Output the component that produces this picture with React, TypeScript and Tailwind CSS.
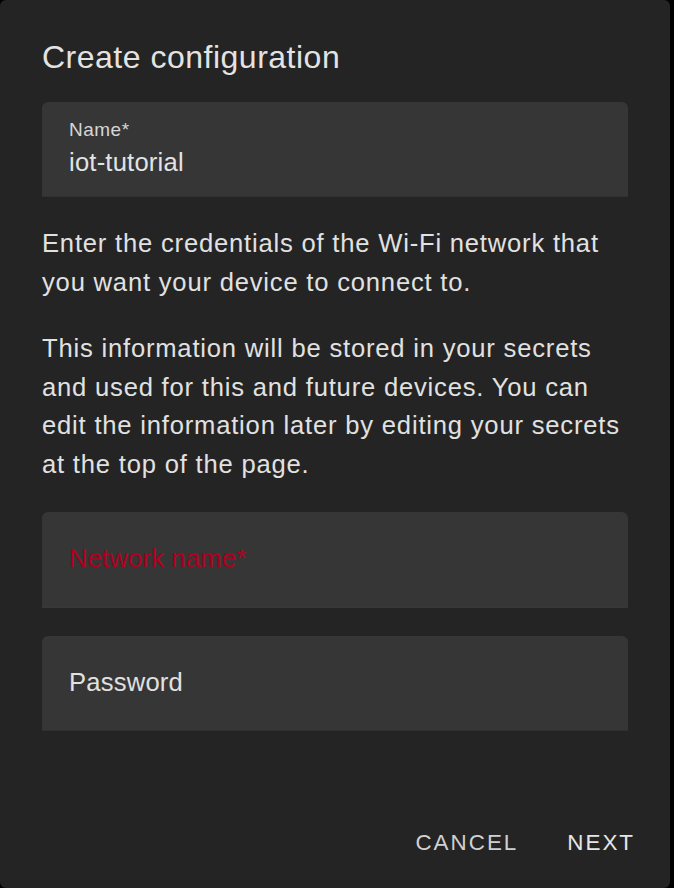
export default function App() {
  return (
    <div className="min-h-screen bg-black" style={{ fontFamily: '"Liberation Sans", Arial, sans-serif' }}>
      <div className="flex h-[888px] w-[670px] flex-col rounded-[6px] bg-[#242424] text-[#e1e1e1]">
        {/* Title */}
        <h2 className="mt-[37px] pl-[42px] text-[32px] leading-[40px] tracking-[0.5px] text-[#e3e3e3]">
          Create configuration
        </h2>

        <div className="flex flex-col px-[42px]">
          {/* Name field */}
          <div className="mt-[25px] h-[95px] rounded-t-[6px] border-b border-[#303030] bg-[#363636] px-[27px] pt-[18px]">
            <div className="text-[19px] leading-[20px] tracking-[0.5px] text-[#d6d6d6]">Name*</div>
            <div className="mt-[8px] text-[25.6px] leading-[28px] tracking-[0.2px] text-[#e3e3e3]">iot-tutorial</div>
          </div>

          <p className="mt-[27px] text-[25.6px] leading-[39px] tracking-[0.8px]">
            Enter the credentials of the Wi-Fi network that you want your device to connect to.
          </p>
          <p className="mt-[27px] text-[25.6px] leading-[38.6px] tracking-[0.8px]">
            This information will be stored in your secrets and used for this and future devices. You can edit the
            information later by editing your secrets at the top of the page.
          </p>

          {/* Network name field */}
          <div className="mt-[29px] h-[96px] rounded-t-[6px] border-b border-[#b00020] bg-[#363636] px-[27px] pt-[32px]">
            <div className="text-[25.6px] leading-[28px] tracking-[0.2px] text-[#b00020]">Network name*</div>
          </div>

          {/* Password field */}
          <div className="mt-[28px] h-[95px] rounded-t-[6px] border-b border-[#303030] bg-[#363636] px-[27px] pt-[32px]">
            <div className="text-[25.6px] leading-[28px] tracking-[0.2px] text-[#e1e1e1]">Password</div>
          </div>
        </div>

        {/* Actions */}
        <div className="mt-auto flex justify-end gap-[49px] pb-[33px] pr-[35px]">
          <button className="text-[22.4px] leading-[24px] tracking-[2px] text-[#d0d0d0]">CANCEL</button>
          <button className="text-[22.4px] leading-[24px] tracking-[2px] text-[#e6e6e6]">NEXT</button>
        </div>
      </div>
    </div>
  );
}
